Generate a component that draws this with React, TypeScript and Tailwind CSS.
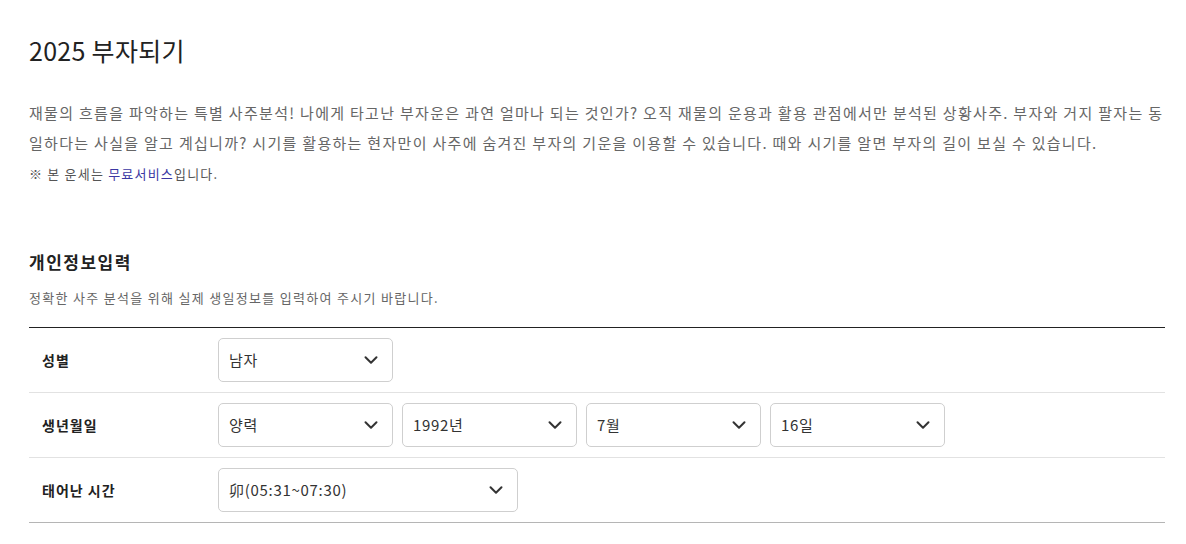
import { ChevronDown } from "lucide-react";

const font = { fontFamily: '"Noto Sans CJK KR", "Noto Sans", sans-serif' };

function Select({ value, width }: { value: string; width: string }) {
  return (
    <div
      className={`flex h-[44px] items-center justify-between rounded-[5px] border border-[#cfcfcf] bg-white pl-[10px] pr-[10px] text-[15px] tracking-[0.7px] text-[#333] ${width}`}
    >
      <span>{value}</span>
      <ChevronDown className="h-[22px] w-[22px] text-[#333]" strokeWidth={2.2} />
    </div>
  );
}

function Row({ label, children, last }: { label: string; children: React.ReactNode; last?: boolean }) {
  return (
    <div
      className={`flex h-[65px] items-center border-b ${last ? "border-[#b5b5b5]" : "border-[#e2e2e2]"}`}
    >
      <div className="w-[189px] pl-[13px] text-[14px] font-bold tracking-[1px] text-[#222]">{label}</div>
      <div className="flex gap-[9px]">{children}</div>
    </div>
  );
}

export default function App() {
  return (
    <div className="min-h-[544px] bg-white pt-[30px]" style={font}>
      <div className="ml-[29px] w-[1136px]">
        <h1 className="text-[25px] leading-[40px] tracking-[0.3px] text-[#222]">2025 부자되기</h1>

        <p className="mt-[28px] break-all text-[15px] leading-[30px] tracking-[1.3px] text-[#666]">
          재물의 흐름을 파악하는 특별 사주분석! 나에게 타고난 부자운은 과연 얼마나 되는 것인가? 오직 재물의 운용과 활용
          관점에서만 분석된 상황사주. 부자와 거지 팔자는 동일하다는 사실을 알고 계십니까? 시기를 활용하는 현자만이 사주에
          숨겨진 부자의 기운을 이용할 수 있습니다. 때와 시기를 알면 부자의 길이 보실 수 있습니다.
        </p>
        <p className="mt-[6px] text-[13px] leading-[20px] tracking-[1.2px] text-[#555]">
          ※ 본 운세는 <span className="text-[#3b37a3]">무료서비스</span>입니다.
        </p>

        <h2 className="mt-[66px] text-[17px] font-bold leading-[24px] tracking-[1.5px] text-[#222]">개인정보입력</h2>
        <p className="mt-[14px] text-[13px] leading-[20px] tracking-[1.3px] text-[#666]">
          정확한 사주 분석을 위해 실제 생일정보를 입력하여 주시기 바랍니다.
        </p>

        <div className="mt-[19px] border-t border-[#222]">
          <Row label="성별">
            <Select value="남자" width="w-[175px]" />
          </Row>
          <Row label="생년월일">
            <Select value="양력" width="w-[175px]" />
            <Select value="1992년" width="w-[175px]" />
            <Select value="7월" width="w-[175px]" />
            <Select value="16일" width="w-[175px]" />
          </Row>
          <Row label="태어난 시간" last>
            <Select value="卯(05:31~07:30)" width="w-[300px]" />
          </Row>
        </div>
      </div>
    </div>
  );
}
